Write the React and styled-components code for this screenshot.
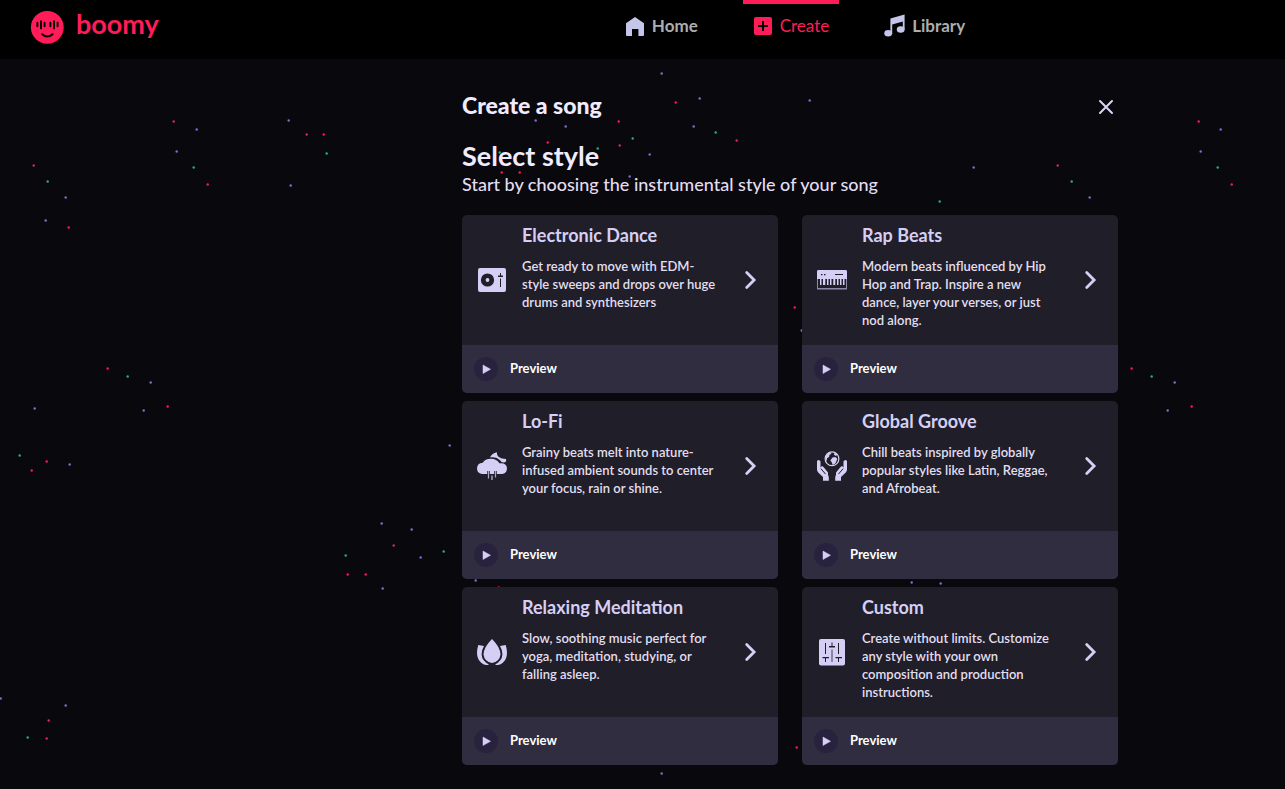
import React from 'react';
import styled, { createGlobalStyle } from 'styled-components';

const c = {
  bg: '#08080d',
  pink: '#ff1c59',
  lilac: '#d6cff5',
  text: '#e2def0',
  card: '#201f29',
  foot: '#302d40',
};

const GlobalStyle = createGlobalStyle`
  * { box-sizing: border-box; }
  body {
    margin: 0;
    background: ${c.bg};
    color: ${c.text};
    font-family: Lato, sans-serif;
  }
  h1, h2, h3, p { margin: 0; }
  button { font: inherit; color: inherit; border: 0; padding: 0; background: none; cursor: pointer; }
`;

const Page = styled.div`
  position: relative;
  min-height: 100vh;
  overflow: hidden;
`;

const Sky = styled.svg`
  position: absolute;
  left: 0;
  top: 0;
`;

const columns = `
  display: grid;
  grid-template-columns: minmax(0, 462fr) minmax(0, 656px) minmax(0, 167fr);
`;

const Header = styled.header`
  ${columns}
  position: relative;
  height: 59px;
  background: #000;
`;

const Brand = styled.a`
  display: flex;
  align-items: center;
  gap: 12px;
  height: 54px;
  padding-left: 30px;
  color: ${c.pink};
  font-size: 27px;
  font-weight: 700;
  line-height: 32px;
  text-decoration: none;
`;

const BrandName = styled.span`
  padding-bottom: 6px;
`;

const Nav = styled.nav`
  display: flex;
  justify-content: center;
  gap: 35px;
  padding-left: 10px;
`;

const NavLink = styled.a`
  display: flex;
  align-items: center;
  gap: 7px;
  height: 48px;
  padding: 0 10px;
  border-top: 4px solid ${(p) => (p.$active ? c.pink : 'transparent')};
  border-radius: 0 0 3px 3px;
  color: ${(p) => (p.$active ? c.pink : '#adadad')};
  font-size: 17px;
  line-height: 20px;
  font-weight: ${(p) => (p.$active ? 400 : 700)};
  text-decoration: none;
`;

const NavLabel = styled.span`
  padding-bottom: 1px;
`;

const Main = styled.main`
  ${columns}
  position: relative;
`;

const Content = styled.div`
  grid-column: 2;
  padding: 32px 0 24px;
`;

const TitleRow = styled.div`
  display: flex;
  align-items: flex-end;
  justify-content: space-between;
  height: 28px;
  padding-right: 4px;
`;

const Title = styled.h1`
  color: #f0ebff;
  font-size: 23px;
  line-height: 28px;
  font-weight: 900;
`;

const Heading = styled.h2`
  margin-top: 20px;
  color: #f0ebff;
  font-size: 27px;
  line-height: 34px;
  font-weight: 700;
`;

const Lead = styled.p`
  font-size: 18px;
  line-height: 22px;
  font-weight: 500;
`;

const CloseButton = styled.button`
  display: flex;
  padding-bottom: 4px;
`;

const Cards = styled.div`
  display: grid;
  grid-template-columns: 1fr 1fr;
  gap: 8px 24px;
  margin-top: 20px;
`;

const Card = styled.article`
  display: flex;
  flex-direction: column;
  border-radius: 5px;
  overflow: hidden;
  background: ${c.card};
`;

const CardBody = styled.button`
  display: grid;
  grid-template-columns: 30px 1fr 24px;
  align-items: center;
  gap: 15px;
  min-height: 130px;
  padding: 0 16px 0 15px;
  text-align: left;
`;

const CardText = styled.span`
  display: flex;
  flex-direction: column;
  gap: 10px;
  align-self: start;
  padding-top: 8px;
`;

const CardTitle = styled.span`
  color: ${c.lilac};
  font-size: 18px;
  line-height: 24px;
  font-weight: 700;
`;

const CardCopy = styled.span`
  max-width: 196px;
  font-size: 13px;
  line-height: 18px;
  font-weight: 600;
`;

const Preview = styled.button`
  display: flex;
  align-items: center;
  gap: 12px;
  height: 48px;
  padding: 0 12px;
  background: ${c.foot};
  color: #fff;
  font-size: 13px;
  line-height: 18px;
  font-weight: 700;
`;

const PreviewLabel = styled.span`
  padding-bottom: 3px;
`;

const PlayDisc = styled.span`
  display: flex;
  width: 24px;
  height: 24px;
  border-radius: 50%;
  background: #28223f;
`;

/* [x, y, colour key] */
const stars = [
  [661, 73, 'v'], [675, 102, 'r'], [699, 98, 'v'], [809, 100, 'v'], [535, 120, 'v'], [565, 126, 'v'],
  [618, 121, 'r'], [632, 138, 'g'], [693, 126, 'v'], [715, 132, 'g'], [736, 140, 'r'], [547, 142, 'r'],
  [619, 145, 'r'], [597, 148, 'g'], [499, 152, 'g'], [649, 154, 'v'], [501, 172, 'r'], [519, 172, 'r'],
  [629, 176, 'v'], [537, 185, 'v'], [651, 185, 'r'],
  [173, 121, 'r'], [196, 129, 'v'], [288, 120, 'v'], [306, 134, 'r'], [323, 134, 'r'], [326, 153, 'g'],
  [176, 151, 'v'], [193, 167, 'g'], [207, 184, 'r'], [290, 185, 'v'], [33, 165, 'r'], [47, 181, 'g'],
  [65, 197, 'v'], [45, 220, 'v'], [68, 227, 'r'],
  [107, 368, 'r'], [127, 376, 'g'], [150, 382, 'v'], [34, 408, 'v'], [143, 410, 'v'], [167, 406, 'r'],
  [19, 455, 'g'], [46, 461, 'r'], [31, 470, 'r'], [69, 464, 'v'],
  [381, 523, 'v'], [411, 529, 'v'], [393, 545, 'r'], [345, 555, 'g'], [420, 557, 'v'], [443, 551, 'g'],
  [347, 574, 'r'], [365, 574, 'r'], [382, 588, 'v'], [449, 445, 'v'],
  [65, 705, 'v'], [48, 720, 'r'], [27, 737, 'g'], [46, 738, 'r'], [0, 698, 'v'],
  [973, 167, 'v'], [939, 201, 'g'], [1071, 181, 'g'], [1057, 165, 'r'], [1089, 197, 'v'],
  [1198, 121, 'r'], [1220, 129, 'v'], [1200, 151, 'v'], [1217, 167, 'g'], [1231, 184, 'r'],
  [794, 307, 'r'], [801, 330, 'v'], [1131, 368, 'r'], [1151, 376, 'g'], [1174, 382, 'v'], [1167, 410, 'v'],
  [1191, 406, 'r'], [475, 580, 'v'], [498, 587, 'r'], [911, 582, 'v'], [940, 583, 'v'], [796, 747, 'r'], [661, 773, 'v'],
];
const starColor = { r: '#f01d53', v: '#7a70cc', g: '#20b08c' };

const NightSky = () => (
  <Sky width="1285" height="789" aria-hidden="true">
    {stars.map(([x, y, k]) => (
      <circle key={`${x}-${y}`} cx={x + 0.7} cy={y + 0.5} r="1.2" fill={starColor[k]} />
    ))}
  </Sky>
);

const BoomyFace = () => (
  <svg width="34" height="34" viewBox="0 0 34 34" aria-hidden="true">
    <circle cx="17.3" cy="17.3" r="16.4" fill={c.pink} />
    <g stroke="#000" strokeWidth="1.9" strokeLinecap="round">
      <path d="M7.4 12.8v3.4M11 11.2v7.2M14.6 12.8v3.4M20.4 12.8v3.4M24 11.2v7.2M27.6 12.8v3.4" />
      <path d="M12.2 24.2q5.1 4.6 10.4 0" fill="none" />
    </g>
  </svg>
);

const HomeIcon = () => (
  <svg width="20" height="22" viewBox="0 0 20 22" fill="#c5c7ea" aria-hidden="true">
    <path d="M1 8.2 10 2l9 6.2V20q0 1-1 1h-4.6v-7H7v7H2q-1 0-1-1z" />
  </svg>
);

const PlusIcon = () => (
  <svg width="20" height="20" viewBox="0 0 20 20" aria-hidden="true">
    <rect x="1" y="1" width="18" height="18" rx="2" fill={c.pink} />
    <path d="M10 5v10M5 10h10" stroke="#000" strokeWidth="2" />
  </svg>
);

const NotesIcon = () => (
  <svg width="21" height="24" viewBox="0 0 21 24" fill="#c5c7ea" aria-hidden="true">
    <path d="M6.400 4.600 20.600 .6v15h-1.800V7.600L8.200 10.600v9.400H6.400z" />
    <ellipse cx="4.200" cy="19.200" rx="3.900" ry="3.200" />
    <ellipse cx="16.700" cy="15.500" rx="3.900" ry="3.200" />
  </svg>
);

const DeckIcon = () => (
  <>
    <rect x="1" y="3" width="28" height="24" rx="2" fill={c.lilac} />
    <circle cx="10.500" cy="15" r="6.600" fill={c.card} />
    <circle cx="10.500" cy="15" r="1.900" fill={c.lilac} />
    <g fill={c.card}>
      <path d="M23 8h1v2.5h2V12h-5v-1.500h2zM23 13.500h1V22h-1z" />
    </g>
  </>
);

const KeysIcon = () => (
  <>
    <path d="M0 6.500Q0 5 1.500 5h27Q30 5 30 6.500V24.500H0z" fill="#8f8aa8" />
    <path d="M0 6.500Q0 5 1.500 5h27Q30 5 30 6.500V14H0z" fill={c.lilac} />
    <path d="M1 14h28v9H1z" fill={c.card} />
    <path d="M3 13.500h1.500v6.500H3zM6 13.500h2.300v6.500H6zM10 13.500h1.500v6.500H10zM13 13.500h1.500v6.500H13zM16.300 13.500h2v6.500h-2zM20 13.500h1.500v6.500H20zM23 13.500h1.500v6.500H23zM26 13.500h1.500v6.500H26z" fill={c.lilac} />
    <path d="M4 9h1.500v1.200H4zM7 9h1.500v1.200H7zM18 9h8v1h-8z" fill={c.card} />
  </>
);

const RainIcon = () => (
  <>
    <path d="M13 6.300Q15 2.300 19.800 1.300q-.3 6.700 9.200 6.700l.2 2.300q-1.200 1.400-3.200 1.200-1.600-.2-2.700-2-3.500-4-10.300-3.200z" fill={c.lilac} />
    <path d="M5.500 23Q0 22.500 0 17.300 .3 12 5.700 11.700 8 7.700 13.800 7.700q6 0 8.600 4.600Q29.500 11.500 30 17.300 29.800 22.500 25 23z" fill={c.lilac} />
    <path d="M11.500 20v3M18.500 20v3" stroke={c.card} strokeWidth="2.600" />
    <path d="M11.500 20v7.500M18.500 20v6.500" stroke="#aaa5c4" strokeWidth="1.200" />
    <path d="M15 24.500v4.500" stroke="#aaa5c4" strokeWidth="1.400" />
  </>
);

const GlobeHandsIcon = () => (
  <>
    <circle cx="15" cy="7.800" r="6.900" fill="none" stroke={c.lilac} strokeWidth="1.200" />
    <path d="M9 4.500Q10.500 2 13 1.300l1.500 1.500-2 1-.5 2.200-2 1.200-.2 3L8.500 8zM15.500 6.500l3-.5 1.800 2-2 4.500-2.500 1.500-1.200-3-1.300-1.500zM17.500 1.500l3 2-1.500 1.500-2-1.200z" fill={c.lilac} />
    <path d="M0 10.500Q0 9 1.500 9T3.500 10.500V16l6.500 6.800q1.800 1.800 1.800 3.700v3.300H6V26L1.200 21.500Q0 20.200 0 18.500zM30 10.500Q30 9 28.500 9t-2 1.500V16L20 22.800q-1.800 1.800-1.800 3.700v3.300H24V26l4.800-4.500Q30 20.200 30 18.500z" fill={c.lilac} />
    <path d="M3.500 16Q5 14.600 6.500 16l4.500 5.500v4L3.500 18zM26.500 16q-1.500-1.400-3 0L19 21.500v4l7.500-7.500z" fill={c.lilac} />
    <path d="M3.800 17.600 8.500 23M26.200 17.600 21.500 23" stroke={c.card} strokeWidth="1" />
  </>
);

const LotusIcon = () => (
  <>
    <path d="M15 2Q23.500 10.500 23.500 17.500 22.500 25 15 26 7.500 25 6.500 17.500 6.500 10.500 15 2z" fill={c.lilac} />
    <path d="M1.300 8 7 9Q4.300 13.500 4.600 17.500 5 24 12 27.500 8 29 4.500 26 0 22 0 16 0 12 1.300 8zM28.700 8 23 9q2.700 4.500 2.400 8.500Q25 24 18 27.500q4 1.500 7.500-1.500Q30 22 30 16q0-4-1.300-8z" fill={c.lilac} />
  </>
);

const MixerIcon = () => (
  <>
    <rect x="2" y="2" width="26" height="26.500" rx="2" fill={c.lilac} />
    <g fill={c.card}>
      <path d="M8 6h1v11H8zM21 6h1v11h-1zM5.500 20H12v1.300H9V25H8v-3.700H5.500zM18.500 20H25v1.300h-3V25h-1v-3.700h-2.500zM14.500 5.500h1V9H18v1.400h-6V9h2.500z" />
    </g>
    <path d="M15 12.500V25" stroke="#77728d" strokeWidth="1.600" />
  </>
);

const Chevron = () => (
  <svg width="24" height="24" viewBox="0 0 24 24" fill="none" aria-hidden="true">
    <path d="M8.700 4.600 16.100 12l-7.400 7.400" stroke={c.lilac} strokeWidth="2.800" strokeLinecap="round" />
  </svg>
);

const styles = [
  { name: 'Electronic Dance', Icon: DeckIcon, copy: 'Get ready to move with EDM-style sweeps and drops over huge drums and synthesizers' },
  { name: 'Rap Beats', Icon: KeysIcon, copy: 'Modern beats influenced by Hip Hop and Trap. Inspire a new dance, layer your verses, or just nod along.' },
  { name: 'Lo-Fi', Icon: RainIcon, copy: 'Grainy beats melt into nature-infused ambient sounds to center your focus, rain or shine.' },
  { name: 'Global Groove', Icon: GlobeHandsIcon, copy: 'Chill beats inspired by globally popular styles like Latin, Reggae, and Afrobeat.' },
  { name: 'Relaxing Meditation', Icon: LotusIcon, copy: 'Slow, soothing music perfect for yoga, meditation, studying, or falling asleep.' },
  { name: 'Custom', Icon: MixerIcon, copy: 'Create without limits. Customize any style with your own composition and production instructions.' },
];

const StyleCard = ({ name, copy, Icon }) => (
  <Card>
    <CardBody type="button">
      <svg width="30" height="30" viewBox="0 0 30 30" aria-hidden="true"><Icon /></svg>
      <CardText>
        <CardTitle>{name}</CardTitle>
        <CardCopy>{copy}</CardCopy>
      </CardText>
      <Chevron />
    </CardBody>
    <Preview type="button">
      <PlayDisc>
        <svg width="24" height="24" viewBox="0 0 24 24" aria-hidden="true">
          <path d="M9 8v8.500l7.500-4.250z" fill={c.lilac} stroke={c.lilac} strokeWidth=".5" strokeLinejoin="round" />
        </svg>
      </PlayDisc>
      <PreviewLabel>Preview</PreviewLabel>
    </Preview>
  </Card>
);

export default function App() {
  return (
    <Page>
      <GlobalStyle />
      <NightSky />
      <Header>
        <Brand href="#"><BoomyFace /><BrandName>boomy</BrandName></Brand>
        <Nav>
          <NavLink href="#home"><HomeIcon /><NavLabel>Home</NavLabel></NavLink>
          <NavLink href="#create" $active aria-current="page"><PlusIcon /><NavLabel>Create</NavLabel></NavLink>
          <NavLink href="#library"><NotesIcon /><NavLabel>Library</NavLabel></NavLink>
        </Nav>
      </Header>
      <Main>
        <Content>
          <TitleRow>
            <Title>Create a song</Title>
            <CloseButton type="button" aria-label="Close">
              <svg width="16" height="16" viewBox="0 0 16 16" aria-hidden="true">
                <path d="M2 2l12 12M14 2 2 14" stroke="#dcd4f5" strokeWidth="2" strokeLinecap="round" />
              </svg>
            </CloseButton>
          </TitleRow>
          <Heading>Select style</Heading>
          <Lead>Start by choosing the instrumental style of your song</Lead>
          <Cards>
            {styles.map((s) => <StyleCard key={s.name} {...s} />)}
          </Cards>
        </Content>
      </Main>
    </Page>
  );
}
